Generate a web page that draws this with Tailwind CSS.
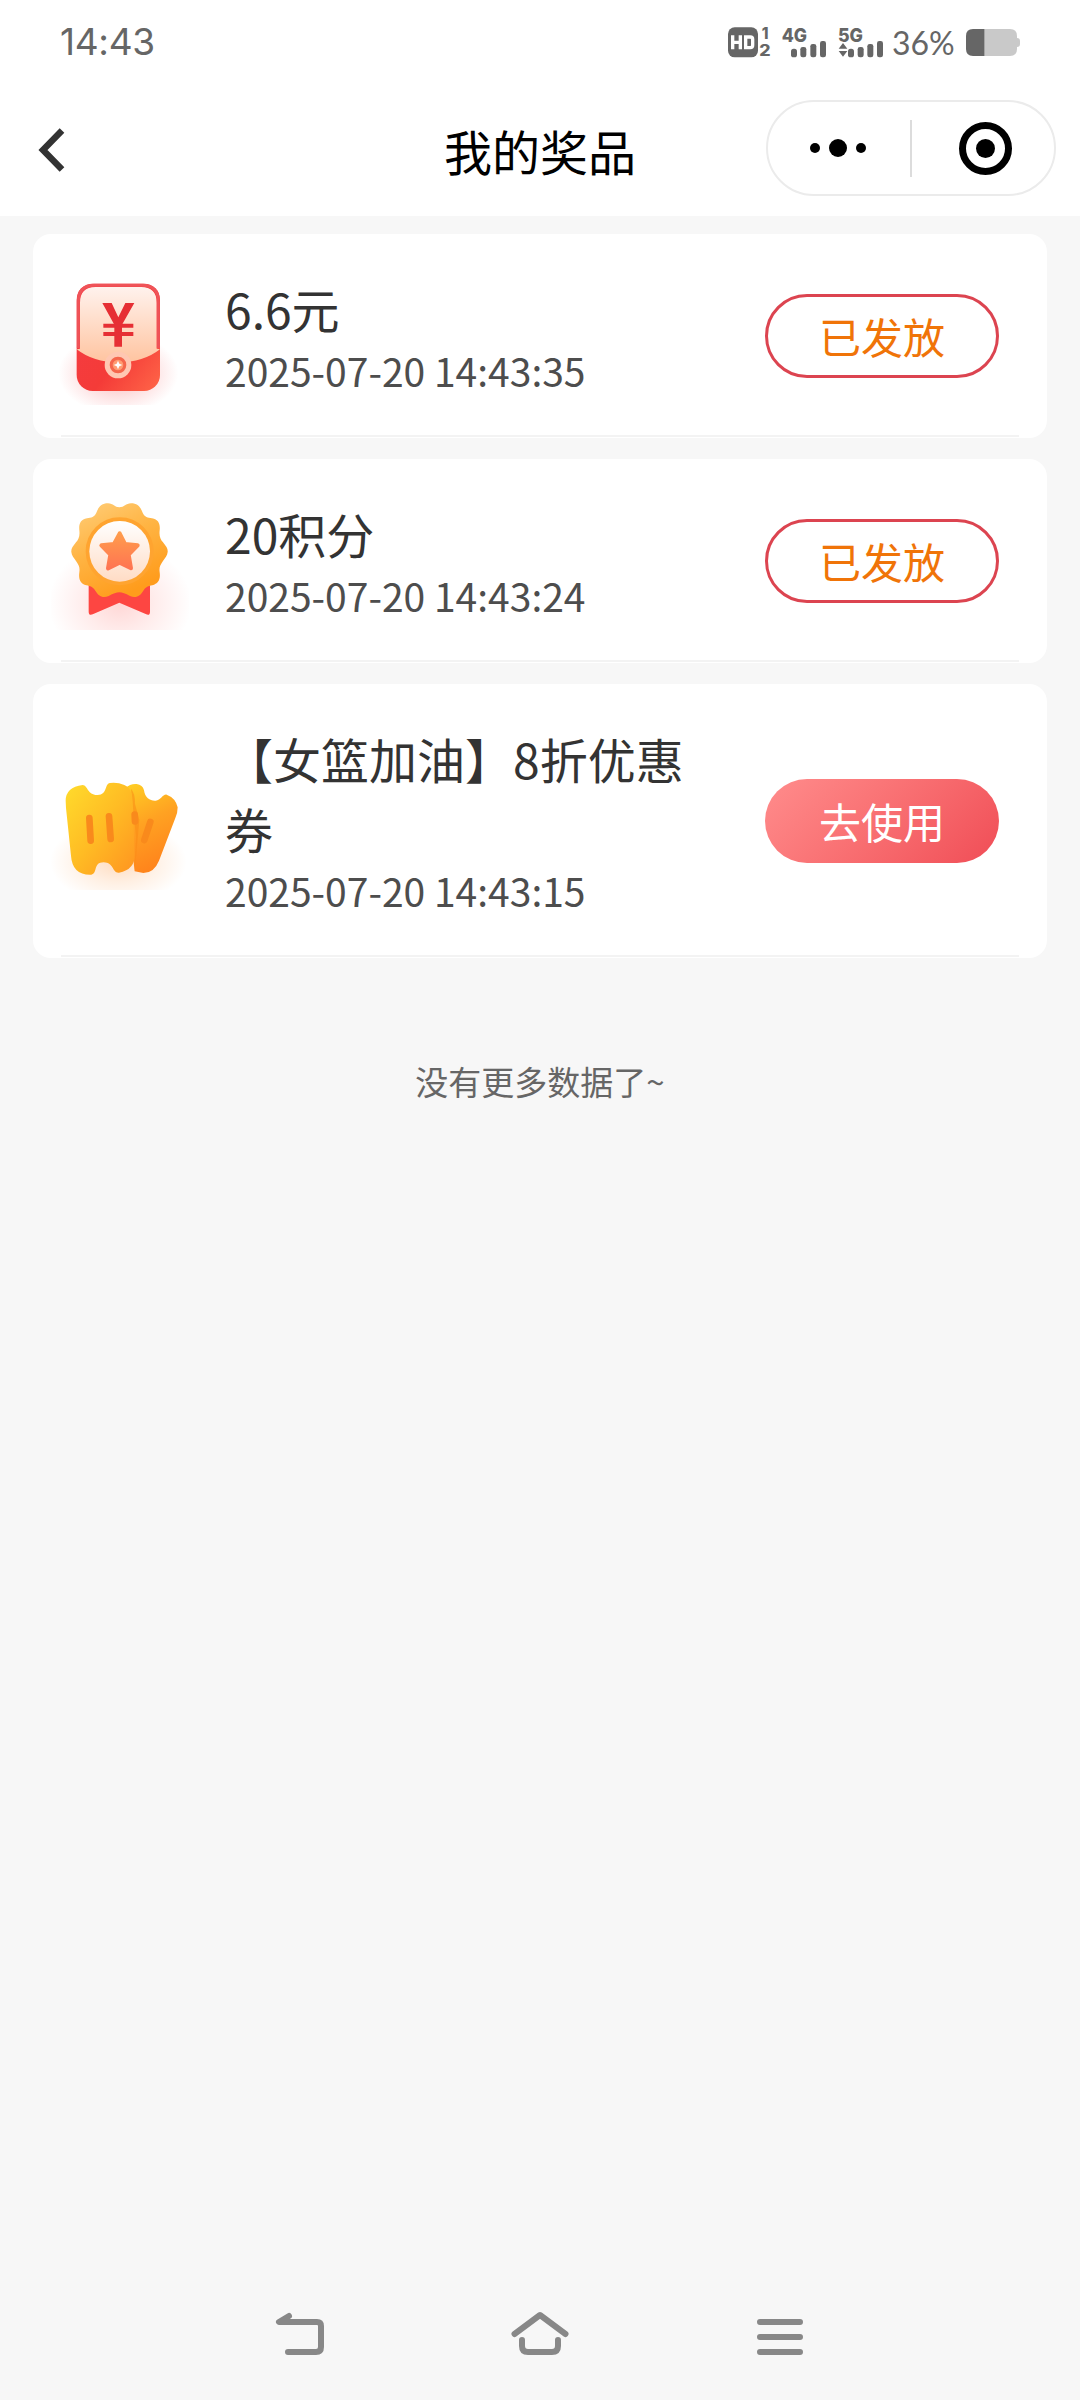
<!DOCTYPE html>
<html lang="zh-CN">
<head>
<meta charset="utf-8">
<title>我的奖品</title>
<script src="https://cdn.jsdelivr.net/npm/@tailwindcss/browser@4"></script>
</head>
<body class="flex h-[2400px] w-[1080px] flex-col overflow-hidden bg-[#f7f7f7] font-['Noto_Sans_CJK_SC',sans-serif] text-[#333]">

<!-- Status bar and title bar -->
<header class="h-[216px] shrink-0 bg-white">
  <div class="flex h-[84px] items-center justify-between pr-[60px] pl-[60px] text-[#666]">
    <span class="font-['Inter',sans-serif] text-[37px] leading-[84px] tracking-[-0.3px]">14:43</span>
    <div class="flex items-center">
      <svg class="h-[51px] w-[156px] overflow-visible" viewBox="84 50 468 153" fill="#666" font-family="Inter, sans-serif" font-weight="800">
        <rect x="84" y="81" width="90" height="90" rx="20"/>
        <g fill="none" stroke="#fff" stroke-width="10"><path d="M98 105V147M121 105V147M98 126H121M137 110V142M132 110H151Q158 110 158 117V135Q158 142 151 142H132"/></g>
        <text x="185" y="115" font-size="46">1</text>
        <text x="178" y="167" font-size="46" textLength="34" lengthAdjust="spacingAndGlyphs">2</text>
        <text x="245" y="124" font-size="57" textLength="76" lengthAdjust="spacingAndGlyphs">4G</text>
        <text x="414" y="124" font-size="57" textLength="75" lengthAdjust="spacingAndGlyphs">5G</text>
        <rect x="273" y="145" width="18" height="26" rx="8"/><rect x="301" y="140" width="18" height="31" rx="7"/><rect x="331" y="131" width="18" height="40" rx="7"/><rect x="360" y="122" width="18" height="49" rx="7"/>
        <rect x="444" y="145" width="18" height="26" rx="8"/><rect x="473" y="140" width="18" height="31" rx="7"/><rect x="502" y="131" width="18" height="40" rx="7"/><rect x="531" y="122" width="18" height="49" rx="7"/>
        <path d="M416 145L429 128L442 145ZM416 152L429 169L442 152Z"/>
      </svg>
      <span class="ml-[8px] w-[74px] pt-[2px] font-['Lato',sans-serif] text-[32px] leading-[82px] whitespace-nowrap">36%</span>
      <svg class="h-[27px] w-[54px]" viewBox="0 0 54 27">
        <path d="M18.500 0H44Q51 0 51 7V9Q54 9 54 12V15Q54 18 51 18V20Q51 27 44 27H18.500Z" fill="#c9c9c9"/>
        <path d="M7 0H18.500V27H7Q0 27 0 20V7Q0 0 7 0Z" fill="#666"/>
      </svg>
    </div>
  </div>
  <div class="grid h-[132px] grid-cols-[1fr_auto_1fr] items-center px-6">
    <svg class="ml-3 h-[44px] w-[32px]" viewBox="0 0 32 44" fill="none" stroke="#333" stroke-width="6.500"><path d="M26 2.500L7 22L26 41.500"/></svg>
    <h1 class="text-[48px] leading-[70px] text-black">我的奖品</h1>
    <div class="mt-[-4px] flex h-[96px] w-[290px] items-center justify-self-end rounded-full border-2 border-[#ebebeb]">
      <svg class="h-[20px] w-[142px]" viewBox="0 0 142 20"><circle cx="47" cy="10" r="5"/><circle cx="70" cy="10" r="9"/><circle cx="93" cy="10" r="5"/></svg>
      <span class="h-[57px] w-[2px] bg-[#dcdcdc]"></span>
      <svg class="ml-[47px] h-[53px] w-[53px]" viewBox="0 0 53 53"><circle cx="26.500" cy="26.500" r="23" fill="none" stroke="#000" stroke-width="7"/><circle cx="26.500" cy="26.500" r="9.500"/></svg>
    </div>
  </div>
</header>

<main class="flex grow flex-col px-[33px] pt-[18px]">
  <ul class="flex flex-col gap-[21px]">
    <li class="flex flex-col rounded-[18px] bg-white px-[28px]">
      <div class="flex items-center pt-[39px] pr-5 pb-[36px]">
        <svg class="-my-[6px] ml-[-10px] h-[138px] w-[138px] shrink-0" viewBox="63 111 414 414">
          <defs>
            <linearGradient id="packetPaper" x2="0" y2="1"><stop stop-color="#fff2ed"/><stop offset="1" stop-color="#ffc4a0"/></linearGradient>
            <linearGradient id="packetRed" x2="1" y2="1"><stop stop-color="#f53c46"/><stop offset=".6" stop-color="#f43b38"/><stop offset="1" stop-color="#ff6648"/></linearGradient>
            <radialGradient id="packetGlow"><stop stop-color="#f5464a" stop-opacity=".4"/><stop offset=".6" stop-color="#f5464a" stop-opacity=".15"/><stop offset="1" stop-color="#f5464a" stop-opacity="0"/></radialGradient>
          </defs>
          <ellipse cx="265" cy="430" rx="180" ry="122" fill="url(#packetGlow)"/>
          <rect x="140" y="161" width="250" height="322" rx="48" fill="url(#packetRed)"/>
          <path d="M150 356V218Q150 171 197 171H333Q380 171 380 218V356L390 358Q340 397 265 397T140 358Z" fill="url(#packetPaper)"/>
          <path d="M145 354V214Q145 166 193 166H337Q385 166 385 214V354" fill="none" stroke="#ef5358" stroke-width="9"/>
          <path d="M220 287H310M220 312H310" fill="none" stroke="#e62f34" stroke-width="12"/>
          <path d="M217 219H245L265 262L286 219H313L276 284V350H253V284Z" fill="#e62f34"/>
          <circle cx="264" cy="405" r="40" fill="#ffc7b2"/><circle cx="264" cy="405" r="25" fill="#f5664c"/><circle cx="264" cy="405" r="16" fill="#ff9c72"/>
          <path d="M264 392L268 401L277 405L268 409L264 418L260 409L251 405L260 401Z" fill="#fff"/>
        </svg>
        <div class="ml-[36px] w-[480px]">
          <p class="text-[48px] leading-[70px]">6.6元</p>
          <p class="-mt-px mb-px text-[39px] leading-[56px] text-[#4d4d4d]">2025-07-20 14:43:35</p>
        </div>
        <button class="ml-auto h-[84px] w-[234px] rounded-full border-3 border-[#dc4450] text-[42px] leading-[60px] text-[#f07408]">已发放</button>
      </div>
      <div class="mb-px h-[2px] bg-[#f3f3f3]"></div>
    </li>

    <li class="flex flex-col rounded-[18px] bg-white px-[28px]">
      <div class="flex items-center pt-[39px] pr-5 pb-[36px]">
        <svg class="-my-[6px] ml-[-10px] h-[138px] w-[138px] shrink-0" viewBox="63 111 414 414">
          <defs>
            <linearGradient id="medalGold" x2=".5" y2="1"><stop stop-color="#ffcf7c"/><stop offset=".5" stop-color="#ffb443"/><stop offset="1" stop-color="#ff9c1c"/></linearGradient>
            <linearGradient id="medalFace" x2="0" y2="1"><stop stop-color="#fff"/><stop offset="1" stop-color="#ffdcc5"/></linearGradient>
            <linearGradient id="medalStar" x2="0" y2="1"><stop stop-color="#ff9c4c"/><stop offset="1" stop-color="#ff7552"/></linearGradient>
            <radialGradient id="medalGlow"><stop stop-color="#ff5a54" stop-opacity=".24"/><stop offset=".5" stop-color="#ff5a54" stop-opacity=".11"/><stop offset="1" stop-color="#ff5a54" stop-opacity="0"/></radialGradient>
          </defs>
          <ellipse cx="270" cy="445" rx="215" ry="180" fill="url(#medalGlow)"/>
          <path d="M176 370H360V470Q360 484 347 477L268 443L190 477Q176 484 176 470Z" fill="#fd4642"/>
          <path d="M268 157 C283 157 287 145 303 145 C323 145 332 157 338 173 C344 187 353 187 366 190 C386 194 391 207 389 226 C387 244 391 252 399 262 C409 275 414 281 413 291 C412 302 406 308 397 321 C390 331 387 338 389 352 C392 373 385 386 367 391 C354 394 348 395 340 407 C331 422 319 431 300 423 C286 416 277 412 268 412 C259 412 250 416 236 423 C217 431 205 422 196 407 C188 395 182 394 169 391 C151 386 145 373 148 352 C150 338 147 331 140 321 C131 308 125 302 124 291 C123 281 128 275 138 262 C146 252 150 244 148 226 C146 207 151 194 171 190 C184 187 193 187 199 173 C205 157 214 145 234 145 C250 145 254 157 268 157Z" fill="url(#medalGold)"/>
          <circle cx="269" cy="289" r="96" fill="none" stroke="#ffa430" stroke-width="12"/>
          <circle cx="269" cy="289" r="91" fill="url(#medalFace)"/>
          <path d="M269 235L285 267L323 271L296 299L303 340L269 323L234 340L241 299L214 271L252 267Z" fill="url(#medalStar)" stroke="url(#medalStar)" stroke-width="12" stroke-linejoin="round"/>
        </svg>
        <div class="ml-[36px] w-[480px]">
          <p class="text-[48px] leading-[70px]">20积分</p>
          <p class="-mt-px mb-px text-[39px] leading-[56px] text-[#4d4d4d]">2025-07-20 14:43:24</p>
        </div>
        <button class="ml-auto h-[84px] w-[234px] rounded-full border-3 border-[#dc4450] text-[42px] leading-[60px] text-[#f07408]">已发放</button>
      </div>
      <div class="mb-px h-[2px] bg-[#f3f3f3]"></div>
    </li>

    <li class="flex flex-col rounded-[18px] bg-white px-[28px]">
      <div class="flex items-center pt-[39px] pr-5 pb-[36px]">
        <svg class="ml-[-10px] h-[138px] w-[138px] shrink-0" viewBox="63 96 414 414">
          <defs>
            <linearGradient id="ticketFront" x2="1" y2="1"><stop stop-color="#ffdc2c"/><stop offset=".5" stop-color="#ffbc24"/><stop offset="1" stop-color="#ff9420"/></linearGradient>
            <linearGradient id="ticketBack" x2=".3" y2="1"><stop stop-color="#ffd024"/><stop offset=".5" stop-color="#ffa222"/><stop offset="1" stop-color="#ff851c"/></linearGradient>
            <radialGradient id="ticketGlow"><stop stop-color="#ff9034" stop-opacity=".32"/><stop offset=".5" stop-color="#ff9034" stop-opacity=".14"/><stop offset="1" stop-color="#ff9034" stop-opacity="0"/></radialGradient>
          </defs>
          <ellipse cx="265" cy="425" rx="205" ry="125" fill="url(#ticketGlow)"/>
          <path d="M285 205Q302 190 320 192Q338 194 342 211C345 235 361 243 377 242C393 241 398 222 410 224Q437 234 443 262Q443 280 436 294L387 422Q372 459 340 459L314 454Z" fill="url(#ticketBack)"/>
          <path d="M303 206Q316 220 315 252L328 300L314 455L318 352Z" fill="#f98a16" opacity=".55"/>
          <path d="M107 242Q107 202 158 195C174 196 172 226 203 225C234 224 222 192 240 189Q262 186 283 195Q304 203 307 234L314 402Q316 449 267 458C246 460 253 428 221 427C188 427 204 461 184 464Q127 466 123 407L108 264Z" fill="url(#ticketFront)"/>
          <path d="M178 294L182 362M237 289L242 357M314 284L315 304M361 306L343 360" fill="none" stroke="#f98a1c" stroke-width="20" stroke-linecap="round"/>
        </svg>
        <div class="ml-[36px] w-[480px]">
          <p class="text-[48px] leading-[70px] [text-spacing-trim:space-all]">【女篮加油】8折优惠券</p>
          <p class="-mt-px mb-px text-[39px] leading-[56px] text-[#4d4d4d]">2025-07-20 14:43:15</p>
        </div>
        <button class="ml-auto h-[84px] w-[234px] rounded-full bg-linear-135 from-[#ff8c8c] to-[#f04c56] text-[42px] leading-[60px] text-white">去使用</button>
      </div>
      <div class="mb-px h-[2px] bg-[#f3f3f3]"></div>
    </li>
  </ul>
  <p class="mt-[99px] text-center text-[33px] leading-[48px] text-[#666]">没有更多数据了~</p>
</main>

<!-- System navigation -->
<nav class="flex h-[126px] shrink-0 items-center justify-center gap-[180px]">
  <svg class="h-[60px] w-[60px]" viewBox="270 2307 60 60" fill="none" stroke="#888" stroke-width="6" stroke-linecap="round" stroke-linejoin="round"><path d="M289 2316L279 2322H317Q321 2322 321 2326V2347Q321 2352 316 2352H288"/></svg>
  <svg class="h-[60px] w-[60px]" viewBox="510 2307 60 60" fill="none" stroke="#888" stroke-width="6" stroke-linecap="round" stroke-linejoin="round"><path d="M514.500 2334L540 2315L565.500 2334M522 2340V2346Q522 2352 528 2352H552Q558 2352 558 2346V2340"/></svg>
  <svg class="h-[60px] w-[60px]" viewBox="750 2307 60 60" fill="none" stroke="#888" stroke-width="6" stroke-linecap="round"><path d="M760 2322H800M760 2337H800M760 2352H800"/></svg>
</nav>
</body>
</html>
